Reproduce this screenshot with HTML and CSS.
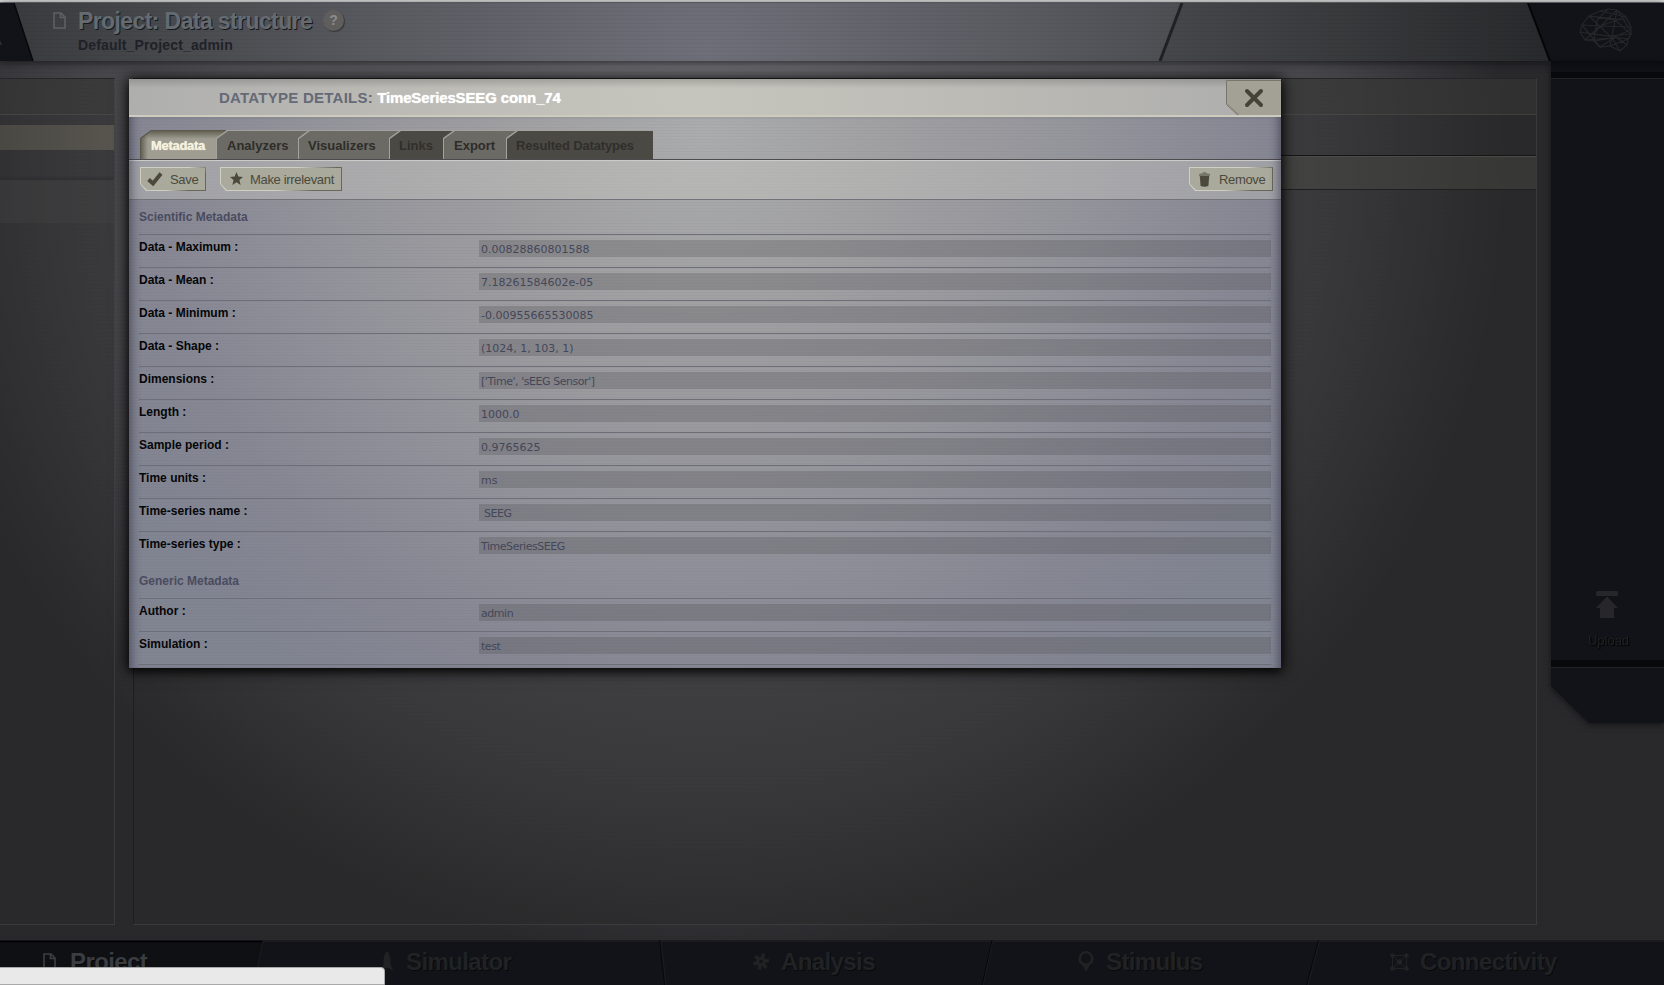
FILE: index.html
```html
<!DOCTYPE html>
<html lang="en">
<head>
<meta charset="utf-8">
<title>Project: Data structure</title>
<link rel="stylesheet" href="styles.css">
</head>
<body>
<div class="page">
  <div class="window-edge"></div>
  <header class="header">
    <svg class="header-shapes" width="1664" height="58" viewBox="0 0 1664 58">
      <polygon points="0,0 14,0 33,58 0,58" fill="#111318"/>
      <path d="M14 0L33 58" stroke="#08080a" stroke-width="1.5"/>
      <polygon points="1182,0 1528,0 1550,58 1161,58" class="header-tail"/>
      <path d="M1182 0L1160 58" stroke="#202124" stroke-width="3"/>
      <polygon points="1527,0 1664,0 1664,58 1550,58" fill="#121318"/>
      <path d="M1528 0L1550 58" stroke="#050506" stroke-width="2"/>
      <path d="M0 37L2 42L0 42Z" fill="#2b2e33"/>
      <g fill="none" stroke="#24262a" stroke-width="1.2" transform="translate(1550 -3)">
        <path d="M30 32L32 25L39 16L50 11L58 9L67 10L76 17L81 27L81 34L78 39L77 45L70 51L60 46L50 47L44 41L35 40Z"/>
        <path d="M39 16L62 38L35 40M30 32L58 36L81 34M32 25L50 47M39 16L65 20L81 34M50 11L76 17M67 10L43 34L30 32M67 10L60 46M58 9L47 20L44 41M76 17L50 26L35 40M67 10L80 30L62 38M39 16L76 20M43 34L78 39L60 46M50 47L66 37L77 45M32 25L50 26L81 27M62 38L70 51M44 41L62 38"/>
      </g>
    </svg>
    <svg class="header-doc" width="13" height="17" viewBox="0 0 13 17"><path d="M1 1H8L12 5V16H1ZM7.5 1V5.5H12" fill="none" stroke="#5c6166" stroke-width="1.6"/></svg>
    <div class="header-titles">
      <div class="header-line"><h1 class="header-title">Project: Data structure</h1><span class="help">?</span></div>
      <div class="header-sub">Default_Project_admin</div>
    </div>
  </header>

  <main class="workspace">
    <section class="tree-panel">
      <div class="tree-head"></div>
      <div class="tree-selected"></div>
      <div class="tree-gap"></div>
      <div class="tree-section"></div>
    </section>
    <section class="main-panel">
      <div class="main-head"></div>
      <div class="main-filter"></div>
      <div class="main-toolbar"></div>
    </section>
    <aside class="side">
      <div class="side-body">
        <div class="side-top"></div>
        <div class="side-upload">
          <svg width="22" height="28" viewBox="0 0 22 28"><rect width="22" height="5" rx="1.5"/><path d="M11 5.5L22 17H18V27H4V17H0Z"/></svg>
          <span>Upload</span>
        </div>
        <div class="side-band"></div>
      </div>
    </aside>
  </main>

  <footer class="footer">
    <svg class="footer-shapes" width="1664" height="45" viewBox="0 0 1664 45">
      <polygon points="0,1 263,1 254,45 0,45" fill="#0f1014"/>
      <path d="M0 1.5H263" stroke="#000" stroke-width="1.5"/>
      <path d="M263 1L254 45M661 0L666 45M993 0L983 45M1320 0L1308 45" stroke="#1c1d21" stroke-width="1" fill="none"/>
      <path d="M659.5 0L664.500 45M992 0L982 45M1318.500 0L1306.500 45" stroke="#08080b" stroke-width="1" fill="none"/>
    </svg>
    <nav class="footer-nav">
      <a class="nav-item nav-project nav-active"><svg width="13" height="17" viewBox="0 0 13 17"><path d="M1 1H8L12 5V16H1ZM7.500 1V5.500H12" fill="none" stroke="currentColor" stroke-width="1.700"/></svg><span>Project</span></a>
      <a class="nav-item nav-simulator"><svg width="12" height="21" viewBox="0 0 12 21"><path d="M5 0Q9 4 8.500 12L11 20L7 17H3L0 20L1.500 12Q1 4 5 0Z" fill="currentColor"/></svg><span>Simulator</span></a>
      <a class="nav-item nav-analysis"><svg width="16" height="17" viewBox="0 0 16 17"><g fill="none" stroke="currentColor" stroke-width="3"><circle cx="8" cy="8.500" r="3.200"/><path stroke-width="3.600" d="M9.500 6L10.500 .5M11 8.300L16 7.500M10.500 11L13 15M7 11.500L6.500 16.500M5 9.500L.5 11M5.500 6.500L2.500 3"/></g></svg><span>Analysis</span></a>
      <a class="nav-item nav-stimulus"><svg width="16" height="21" viewBox="0 0 16 21"><path fill-rule="evenodd" fill="currentColor" d="M8 0A8 8 0 0 1 14.500 12Q11 14 8 21Q5 14 1.500 12A8 8 0 0 1 8 0ZM8 2.500A5 5 0 0 0 8 12.500A5 5 0 0 0 8 2.500Z"/></svg><span>Stimulus</span></a>
      <a class="nav-item nav-connectivity"><svg width="19" height="18" viewBox="0 0 19 18"><g fill="none" stroke="currentColor" stroke-width="1"><path d="M2.500 2.500H16.500V15.500H2.500ZM3 3L16 15M16 3L3 15"/></g><g fill="currentColor"><circle cx="2.500" cy="2.500" r="2.300"/><circle cx="16.500" cy="2.500" r="2.300"/><circle cx="2.500" cy="15.500" r="2.300"/><circle cx="16.500" cy="15.500" r="2.300"/><circle cx="9.500" cy="9" r="2.800"/></g></svg><span>Connectivity</span></a>
    </nav>
  </footer>
</div>

<div class="modal">
  <div class="modal-head">
    <h2 class="modal-title"><span class="modal-kind">DATATYPE DETAILS:</span> <span class="modal-name">TimeSeriesSEEG conn_74</span></h2>
    <button class="close"><svg width="55" height="38" viewBox="0 0 55 38"><path d="M0 0H55V38H14.500L0 24.500Z" fill="#a3a096"/><path d="M55 .5H.5V24.500L14.500 37.500" fill="none" stroke="#7a766a"/><path d="M1.500 24L15.500 37" fill="none" stroke="#8f8c80"/><path d="M21 11L35 25M35 11L21 25" stroke="#454338" stroke-width="4" stroke-linecap="round"/></svg></button>
  </div>
  <div class="tabs">
    <div class="tab tab-active tab-metadata"><span>Metadata</span></div>
    <div class="tab tab-analyzers"><span>Analyzers</span></div>
    <div class="tab tab-visualizers"><span>Visualizers</span></div>
    <div class="tab tab-off tab-links"><span>Links</span></div>
    <div class="tab tab-export"><span>Export</span></div>
    <div class="tab tab-off tab-results"><span>Resulted Datatypes</span></div>
  </div>
  <div class="toolbar">
    <div class="btn btn-save"><div class="btn-face"><svg width="16" height="14" viewBox="0 0 16 14"><path d="M1.500 7.500L6 11.500L14 1.500" fill="none" stroke="#4a493c" stroke-width="3.900"/></svg><span>Save</span></div></div>
    <div class="btn btn-irrelevant"><div class="btn-face"><svg width="13" height="13" viewBox="0 0 12 12"><path d="M6 0L7.700 4.200L12 4.500L8.700 7.300L9.800 12L6 9.400L2.200 12L3.300 7.300L0 4.500L4.300 4.200Z" fill="#4a493c"/></svg><span>Make irrelevant</span></div></div>
    <div class="btn btn-remove"><div class="btn-face"><svg width="11" height="15" viewBox="0 0 11 15"><path d="M0 2.500Q0 1.500 3.500 1.200Q4 0 5.500 0T7.500 1.200Q11 1.500 11 2.500V4H0Z" fill="#77766a"/><path d="M.8 4H10.200L9.400 14Q5.500 15.500 1.600 14Z" fill="#4a493c"/></svg><span>Remove</span></div></div>
  </div>
  <div class="details">
    <h3 class="section">Scientific Metadata</h3>
    <div class="row"><label>Data - Maximum :</label><div class="field">0.00828860801588</div></div>
    <div class="row"><label>Data - Mean :</label><div class="field">7.18261584602e-05</div></div>
    <div class="row"><label>Data - Minimum :</label><div class="field">-0.00955665530085</div></div>
    <div class="row"><label>Data - Shape :</label><div class="field">(1024, 1, 103, 1)</div></div>
    <div class="row"><label>Dimensions :</label><div class="field words">['Time', 'sEEG Sensor']</div></div>
    <div class="row"><label>Length :</label><div class="field">1000.0</div></div>
    <div class="row"><label>Sample period :</label><div class="field">0.9765625</div></div>
    <div class="row"><label>Time units :</label><div class="field">ms</div></div>
    <div class="row"><label>Time-series name :</label><div class="field words">&nbsp;SEEG</div></div>
    <div class="row"><label>Time-series type :</label><div class="field words">TimeSeriesSEEG</div></div>
    <h3 class="section">Generic Metadata</h3>
    <div class="row"><label>Author :</label><div class="field words">admin</div></div>
    <div class="row"><label>Simulation :</label><div class="field words">test</div></div>
    <div class="row"></div>
  </div>
</div>

<div class="status-bubble"></div>
</body>
</html>
```
FILE: styles.css
```css
* { box-sizing: border-box; }
body {
  margin: 0;
  width: 1664px;
  height: 985px;
  overflow: hidden;
  position: relative;
  font-family: "Liberation Sans", Arial, Helvetica, sans-serif;
  background: #29292b;
}
h1, h2, h3 { margin: 0; font-weight: bold; }
.page {
  height: 985px;
  display: flex;
  flex-direction: column;
  background: repeating-linear-gradient(rgba(0,0,0,.03) 0 1px, transparent 1px 4px),
    radial-gradient(circle 800px at 705px 160px, #77777c 0%, #626266 30%, #56565a 60%, #434347 80%, #29292c 100%);
}

/* header */
.window-edge { height: 3px; background: #dcdedc; border-bottom: 1px solid #77797b; }
.header {
  height: 58px;
  position: relative;
  display: flex;
  padding-left: 53px;
  background: repeating-linear-gradient(rgba(0,0,0,.04) 0 1px, transparent 1px 4px),
    radial-gradient(circle 860px at 705px 50px, #6e6f78 0%, #5b5c62 35%, #4a4b4f 60%, #37383a 84%, #2a2b2e 100%);
  box-shadow: 0 1px 8px rgba(10,10,14,.75);
}
.header-shapes { position: absolute; left: 0; top: 0; }
.header-tail { fill: rgba(20,20,24,.14); }
.header-doc { position: relative; margin: 9px 12px 0 0; }
.header-titles { position: relative; padding-top: 4px; }
.header-line { display: flex; align-items: center; height: 28px; }
.header-title {
  font-size: 23px;
  line-height: 28px;
  width: 234px;
  letter-spacing: -.6px;
  white-space: nowrap;
  color: #646b71;
  text-shadow: 1px 1px 0 #17181b;
}
.help {
  margin: -1px 0 0 11px;
  width: 21px;
  height: 21px;
  border-radius: 50%;
  background: #5f5e5d;
  color: #8b8b8b;
  font-size: 14px;
  font-weight: bold;
  line-height: 21px;
  text-align: center;
  box-shadow: 1px 1px 1px rgba(0,0,0,.4);
}
.header-sub { font-size: 14px; font-weight: bold; line-height: 16px; margin-top: 2px; letter-spacing: .15px; color: #202128; }

/* workspace */
.workspace { flex: 1; display: flex; padding-top: 17px; }
.tree-panel {
  width: 115px;
  height: 847px;
  margin-right: 18px;
  background: rgba(42,42,43,.45);
  border: solid rgba(80,80,78,.45);
  border-width: 1px 1px 1px 0;
  border-top-color: #252527;
}
.tree-head { height: 36px; background: rgba(60,60,58,.35); border-bottom: 1px solid rgba(90,90,84,.4); }
.tree-selected {
  height: 25px;
  margin-top: 10px;
  background: linear-gradient(90deg, #4a4843, #57554e);
}
.tree-gap { height: 30px; background: linear-gradient(transparent 85%, rgba(30,30,32,.35)); }
.tree-section { height: 43px; background: rgba(68,69,69,.35); }
.main-panel {
  width: 1404px;
  height: 847px;
  margin-right: 14px;
  background: rgba(42,43,43,.45);
  border: 1px solid rgba(75,75,74,.5);
  border-left-color: #1e1e20;
  border-top-color: #252527;
}
.main-head { height: 36px; background: rgba(62,62,60,.35); border-bottom: 1px solid rgba(85,85,78,.45); }
.main-filter { height: 41px; border-bottom: 1px solid #151516; }
.main-toolbar { height: 34px; background: rgba(78,79,72,.38); border-top: 1px solid #4a4a48; border-bottom: 1px solid #1f1f21; }

/* right rail */
.side { width: 113px; margin-top: -17px; filter: drop-shadow(0 2px 3px rgba(0,0,0,.5)); }
.side-body {
  height: 662px;
  background: #121318;
  clip-path: polygon(0 0, 100% 0, 100% 100%, 38px 100%, 0 625px);
}
.side-top { height: 18px; background: linear-gradient(#0b0c10 0, #101116 11px, #08090c 11px); border-bottom: 1px solid #222327; }
.side-upload {
  height: 581px;
  padding-top: 512px;
  display: flex;
  flex-direction: column;
  align-items: center;
  font-size: 13px;
  fill: #26262b;
  color: #202124;
  text-shadow: 1px 1px 1px #000;
}
.side-upload svg { margin-right: 1px; }
.side-upload span { margin-top: 14px; padding-left: 2px; line-height: 15px; }
.side-band { height: 8px; margin-top: 0; background: #08090d; border-bottom: 1px solid #222327; }

/* footer */
.footer { height: 45px; position: relative; background: #121318; border-top: 2px solid #1b1b20; }
.footer-shapes { position: absolute; left: 0; top: -2px; }
.footer-nav {
  position: relative;
  display: grid;
  grid-template-columns: 382px 371px 325px 312px 1fr;
  padding-top: 6px;
  font-size: 24px;
  font-weight: bold;
  color: #202224;
}
.nav-item { display: flex; align-items: center; height: 27px; line-height: 27px; text-shadow: 1px 1px 0 #08090b; letter-spacing: -.6px; }
.nav-active { color: #3a3d41; }
.nav-project { padding-left: 43px; gap: 14px; }
.nav-simulator { gap: 12px; }
.nav-analysis { gap: 12px; }
.nav-stimulus { gap: 12px; }
.nav-connectivity { gap: 11px; }

/* dialog */
.modal {
  position: absolute;
  left: 129px;
  top: 79px;
  width: 1152px;
  height: 589px;
  overflow: hidden;
  display: flex;
  flex-direction: column;
  background: repeating-linear-gradient(rgba(0,0,0,.025) 0 1px, transparent 1px 3px),
    radial-gradient(circle 680px at 576px 50px, #abacad 0%, #a1a1a3 25%, #93939b 58%, #868793 82%, #818491 100%);
  box-shadow: 0 0 14px 2px rgba(0,0,0,.75), 0 4px 8px rgba(0,0,0,.6);
}
.modal::after {
  content: "";
  position: absolute;
  inset: 38px 0 0 0;
  box-shadow: inset 10px 0 9px -7px rgba(40,40,60,.5), inset -10px 0 9px -7px rgba(40,40,60,.5);
  pointer-events: none;
}
.modal-head {
  height: 38px;
  flex: none;
  display: flex;
  justify-content: space-between;
  padding-left: 90px;
  border-bottom: 2px solid #cccbbd;
  background: linear-gradient(rgba(90,90,90,.3), transparent 9px), radial-gradient(circle 600px at 560px 10px, #c6c5bd, #bbbab5 50%, #adadac);
}
.modal-title { font-size: 15px; line-height: 37px; white-space: nowrap; }
.modal-kind { color: #646a76; letter-spacing: .25px; }
.modal-name { color: #fff; letter-spacing: -.13px; text-shadow: 0 0 1px #fff; }
.close { border: 0; padding: 0; margin: 0; height: 36px; width: 55px; background: none; overflow: hidden; }
.close svg { display: block; margin-top: 1px; height: 38px; }

.tabs { height: 44px; flex: none; display: flex; padding: 13px 0 0 11px; border-bottom: 1px solid #cbcbc9; box-shadow: inset 0 -1px 0 #4c4a4c; }
.tab {
  height: 29px;
  margin-right: -10px;
  padding: 1px 0 0 1px;
  background: #a3a29c;
  clip-path: polygon(0 8px, 11px 0, 100% 0, 100% 100%, 0 100%);
  font-size: 13px;
  font-weight: bold;
  line-height: 30px;
  color: #2e2d2a;
}
.tab span {
  display: block;
  height: 28px;
  padding-left: 9px;
  white-space: nowrap;
  background: #6c6a64;
  clip-path: polygon(0 8px, 11px 0, 100% 0, 100% 100%, 0 100%);
}
.tab-off span { color: #302f2c; background: #4b4944; }
.tab-active { background: #5b594d; color: #f5f3df; }
.tab-active span {
  padding-left: 10px;
  background: linear-gradient(90deg, rgba(75,72,58,.7), transparent 7px), linear-gradient(rgba(75,72,58,.7), transparent 8px), #9f9c91;
  text-shadow: 0 0 1px #f5f3df;
  letter-spacing: -.3px;
}
.tab-metadata { width: 86px; }
.tab-analyzers { width: 92px; }
.tab-analyzers span { padding-left: 10px; }
.tab-visualizers { width: 101px; }
.tab-links { width: 64px; }
.tab-export { width: 73px; }
.tab-export span { padding-left: 10px; }
.tab-results { width: 147px; letter-spacing: -.15px; }

.toolbar {
  height: 39px;
  flex: none;
  display: flex;
  padding: 6px 8px 0 11px;
  border-bottom: 1px solid #727278;
  background: rgba(205,205,200,.37);
}
.btn { height: 24px; padding: 1px; background: linear-gradient(135deg, #cfcfc2 0 55%, #69675a 80%); clip-path: polygon(0 0, 100% 0, 100% 100%, 6px 100%, 0 17px); }
.btn-face {
  height: 22px;
  display: flex;
  align-items: center;
  background: #a9a99c;
  clip-path: polygon(0 0, 100% 0, 100% 100%, 6px 100%, 0 16px);
  color: #4a493c;
  font-size: 13px;
  line-height: 22px;
  white-space: nowrap;
  letter-spacing: -.33px;
}
.btn-face span { padding-top: 2px; }
.btn-save { width: 66px; margin-right: 14px; }
.btn-save .btn-face { padding-left: 6px; gap: 7px; }
.btn-irrelevant { width: 122px; }
.btn-irrelevant .btn-face { padding-left: 9px; gap: 7px; }
.btn-irrelevant svg { margin-top: -2px; }
.btn-remove { width: 84px; margin-left: auto; }
.btn-remove .btn-face { padding-left: 9px; gap: 9px; }

.details { padding: 0 10px; }
.section { height: 34px; font-size: 12px; line-height: 35px; color: #4a4b5f; }
.details .section ~ .section { line-height: 34px; }
.row {
  height: 33px;
  display: grid;
  grid-template-columns: 340px 1fr;
  border-top: 1px solid #6d6e78;
}
.row label { font-size: 12px; font-weight: bold; line-height: 25px; color: #060608; }
.field {
  height: 17px;
  margin-top: 5px;
  padding-left: 2px;
  font-family: "DejaVu Sans", sans-serif;
  font-size: 11px;
  line-height: 19px;
  white-space: nowrap;
  color: #444759;
  background: rgba(80,80,84,.28);
}
.words { letter-spacing: -.45px; }

.status-bubble {
  position: absolute;
  left: -1px;
  top: 967px;
  width: 386px;
  height: 18px;
  background: #e9e9e9;
  border: 1px solid #a9a9a9;
  border-radius: 0 4px 0 0;
}
```
